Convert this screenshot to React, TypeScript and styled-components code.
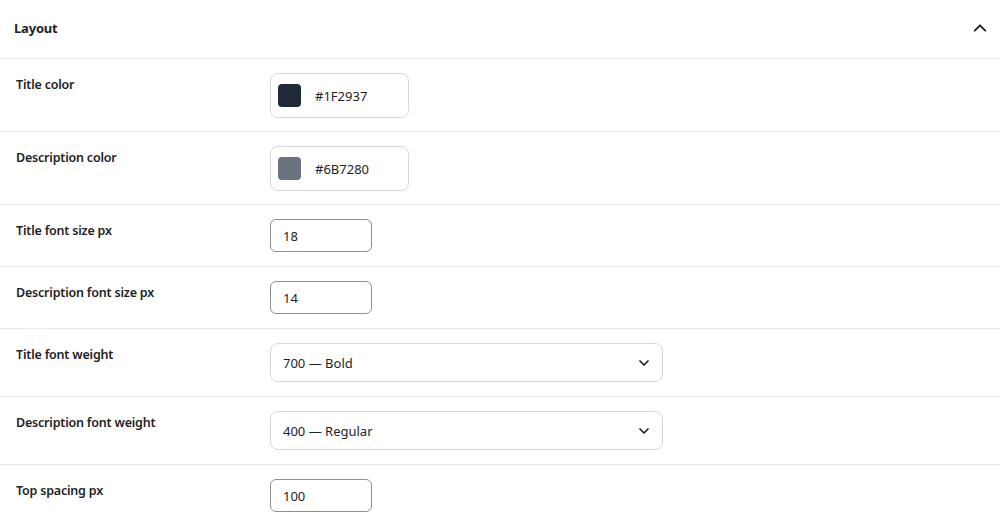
import React from 'react'
import styled, { createGlobalStyle } from 'styled-components'

// ── Global ─────────────────────────────────────────────────────────

const Global = createGlobalStyle`
  html, body { margin: 0; padding: 0; background: #fff; }
  body {
    font-family: "Noto Sans", "Open Sans", "Liberation Sans", sans-serif;
    color: #1d2327;
  }
  * { box-sizing: border-box; }
`

// ── Styled ─────────────────────────────────────────────────────────

const Panel = styled.section`
  width: 1000px;
  background: #fff;
`

const Header = styled.div`
  height: 59px;
  display: flex;
  align-items: center;
  justify-content: space-between;
  padding: 0 11px 2px 14px;
  border-bottom: 1px solid #e5e7eb;
`

const Heading = styled.h2`
  margin: 0;
  font-size: 13px;
  font-weight: 700;
  letter-spacing: -0.2px;
  color: #1d2327;
`

const Toggle = styled.button`
  border: none;
  background: none;
  padding: 0;
  display: flex;
  color: #1d2327;
  cursor: pointer;
`

const Row = styled.div`
  display: grid;
  grid-template-columns: 270px 1fr;
  align-items: start;
  padding: 14px 0 13px 0;
  border-bottom: 1px solid #e8e9eb;
  &:last-child { border-bottom: none; }
`

const Label = styled.label`
  padding: 0 0 0 16px;
  margin-top: 2px;
  font-size: 12.5px;
  line-height: 20px;
  font-weight: 600;
  letter-spacing: -0.2px;
  color: #1d2327;
`

const ColorBox = styled.div`
  width: 139px;
  height: 45px;
  display: flex;
  align-items: center;
  gap: 14px;
  padding: 0 7px;
  border: 1px solid #d5d8dc;
  border-radius: 8px;
  font-size: 13px;
  color: #1d2327;
`

const Swatch = styled.span<{ $c: string }>`
  width: 23px;
  height: 23px;
  border-radius: 4px;
  background: ${(p) => p.$c};
`

const NumInput = styled.input`
  width: 102px;
  height: 33px;
  padding: 0 12px;
  border: 1px solid #8c8f94;
  border-radius: 6px;
  font: inherit;
  font-size: 13px;
  color: #1d2327;
  background: #fff;
  margin-bottom: 1px;
`

const SelectBox = styled.div`
  position: relative;
  width: 393px;
  height: 39px;
  display: flex;
  align-items: center;
  padding: 0 12px;
  border: 1px solid #d5d8dc;
  border-radius: 8px;
  font-size: 13px;
  color: #1d2327;
  margin-bottom: 1px;
`

const Caret = styled.span`
  position: absolute;
  right: 12px;
  top: 50%;
  transform: translateY(-50%);
  display: flex;
`

// ── Components ─────────────────────────────────────────────────────

function ChevronUp() {
  return (
    <svg width="18" height="18" viewBox="0 0 24 24" fill="none" stroke="currentColor" strokeWidth="2.6" strokeLinecap="round" strokeLinejoin="round">
      <path d="M5 15.5l7-7 7 7" />
    </svg>
  )
}

function ChevronDown() {
  return (
    <svg width="12" height="12" viewBox="0 0 24 24" fill="none" stroke="#1d2327" strokeWidth="3.4" strokeLinecap="round" strokeLinejoin="round">
      <path d="M4 8l8 8 8-8" />
    </svg>
  )
}

function ColorField({ value }: { value: string }) {
  return (
    <ColorBox>
      <Swatch $c={value} />
      <span>{value}</span>
    </ColorBox>
  )
}

function SelectField({ value }: { value: string }) {
  return (
    <SelectBox>
      {value}
      <Caret><ChevronDown /></Caret>
    </SelectBox>
  )
}

export default function App() {
  return (
    <Panel>
      <Global />
      <Header>
        <Heading>Layout</Heading>
        <Toggle aria-label="Collapse"><ChevronUp /></Toggle>
      </Header>
      <Row>
        <Label>Title color</Label>
        <ColorField value="#1F2937" />
      </Row>
      <Row>
        <Label>Description color</Label>
        <ColorField value="#6B7280" />
      </Row>
      <Row>
        <Label>Title font size px</Label>
        <div><NumInput defaultValue="18" /></div>
      </Row>
      <Row>
        <Label>Description font size px</Label>
        <div><NumInput defaultValue="14" /></div>
      </Row>
      <Row>
        <Label>Title font weight</Label>
        <SelectField value="700 — Bold" />
      </Row>
      <Row>
        <Label>Description font weight</Label>
        <SelectField value="400 — Regular" />
      </Row>
      <Row>
        <Label>Top spacing px</Label>
        <div><NumInput defaultValue="100" /></div>
      </Row>
    </Panel>
  )
}
